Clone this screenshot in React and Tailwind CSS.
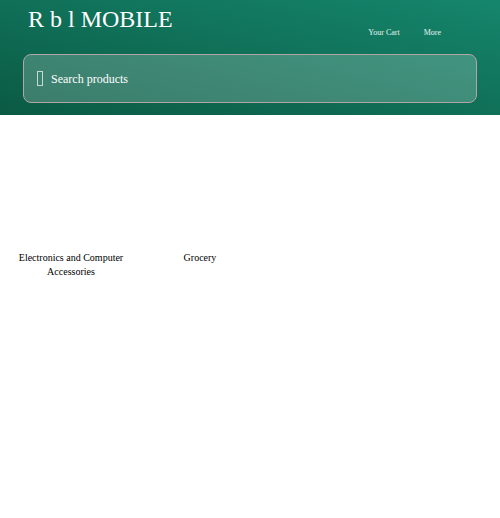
import React from 'react';

const categories = [
    { name: 'Electronics and Computer Accessories' },
    { name: 'Grocery' },
];

const App = () => {
    return (
        <div className="min-h-[518px] bg-white font-['Liberation_Serif','Times_New_Roman',serif]">
            {/* Header */}
            <header className="bg-linear-to-tr from-[#0b5a44] to-[#15866c] px-[23px] pt-[6px] pb-[12px]">
                <div className="h-[27px] flex justify-between items-start">
                    <h1 className="pl-[5px] text-[24px] leading-[27px] text-white font-normal">R b l MOBILE</h1>
                    <nav className="flex items-center gap-[24px] pt-[22px] pr-[36px] text-[8px] leading-[10px] text-white/90">
                        <span>Your Cart</span>
                        <span>More</span>
                    </nav>
                </div>

                {/* Search */}
                <div className="mt-[21px] h-[49px] flex items-center gap-[8px] pl-[13px] rounded-[8px] border border-[#b3a5a5] bg-white/20">
                    <span className="w-[6px] h-[15px] border border-white/70"></span>
                    <span className="text-[12px] text-white">Search products</span>
                </div>
            </header>

            {/* Categories */}
            <div className="flex gap-[1px] px-[7px]">
                {categories.map((cat) => (
                    <div key={cat.name} className="w-[128px] pt-[8px] flex flex-col items-center">
                        <div className="w-[128px] h-[128px]"></div>
                        <p className="text-[10px] leading-[14px] text-black text-center">{cat.name}</p>
                    </div>
                ))}
            </div>
        </div>
    );
};

export default App;
